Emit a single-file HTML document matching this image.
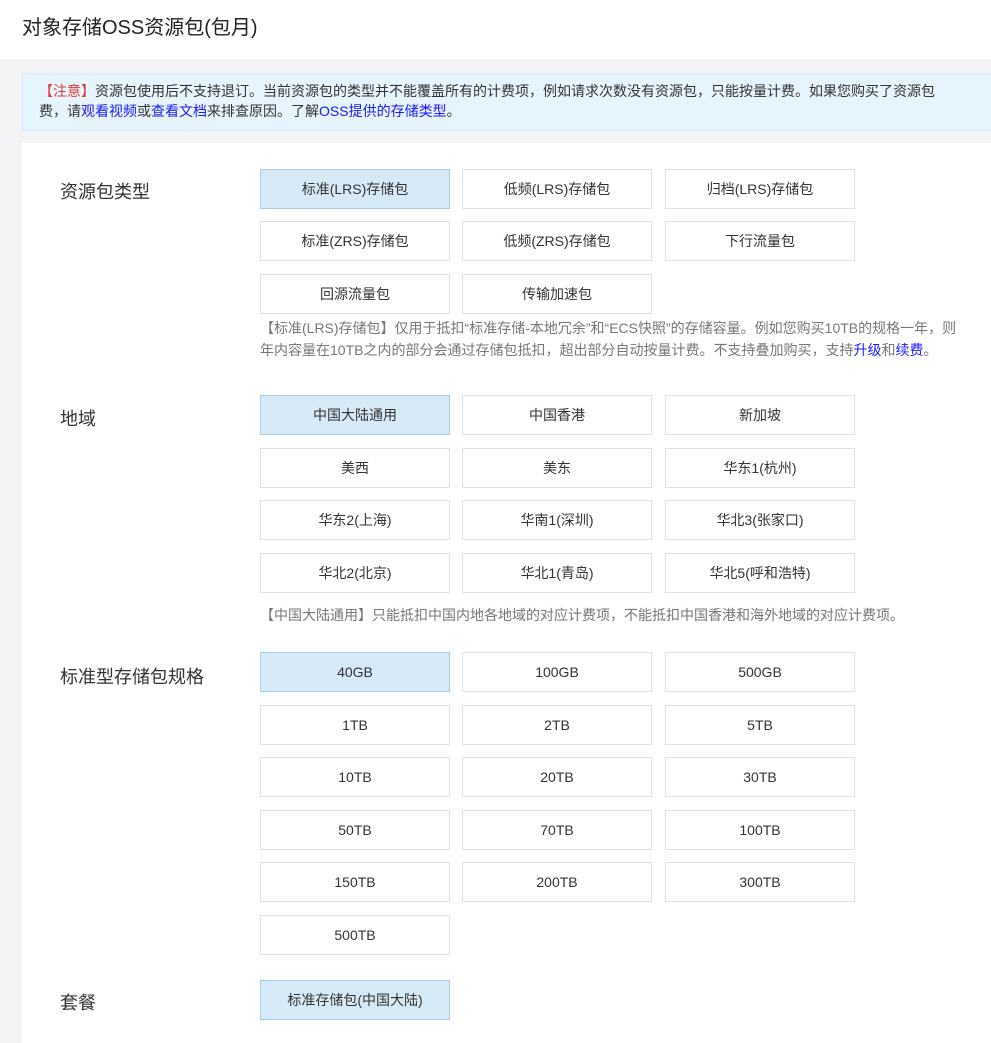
<!DOCTYPE html>
<html><head><meta charset="utf-8"><style>
*{margin:0;padding:0;box-sizing:border-box}
body{width:991px;height:1040px;overflow:hidden;background:#f2f3f5;font-family:"Liberation Sans","Noto Sans CJK SC",sans-serif;position:relative;color:#333}
.hd{position:absolute;left:0;top:0;width:991px;height:59px;background:#fff}
.hd h1{position:absolute;left:22px;top:13px;font-size:20px;font-weight:normal;color:#222;line-height:30px}
.nt{position:absolute;left:22px;top:73px;width:990px;height:58px;background:#e6f4fd;border:1px solid #d8eaf5;font-size:14px;line-height:20px;padding:7px 0 0 16px;color:#333;white-space:nowrap}
.nt .r{color:#e4393c}.nt a,.ds a{color:#1a1aff;text-decoration:none}
.pn{position:absolute;left:22px;top:143px;width:980px;height:900px;background:linear-gradient(#fff 960px,#f7f7f7)}
.lb{position:absolute;left:60px;font-size:18px;color:#333;line-height:24px}
.b{position:absolute;width:190px;height:40px;border:1px solid #e1e1e1;background:#fff;font-size:14px;text-align:center;line-height:38px;color:#333}
.b.s{background:#d6e9f6;border-color:#a9cbe8}
.ds{position:absolute;left:260px;font-size:14px;color:#777;line-height:22px;white-space:nowrap}
</style></head><body>
<div class="hd"><h1>对象存储OSS资源包(包月)</h1></div>
<div class="nt"><span class="r">【注意】</span>资源包使用后不支持退订。当前资源包的类型并不能覆盖所有的计费项，例如请求次数没有资源包，只能按量计费。如果您购买了资源包<br>费，请<a>观看视频</a>或<a>查看文档</a>来排查原因。了解<a>OSS提供的存储类型</a>。</div>
<div class="pn"></div>
<div class="lb" style="top:180px">资源包类型</div>
<div class="b s" style="left:260px;top:169px">标准(LRS)存储包</div>
<div class="b" style="left:462px;top:169px">低频(LRS)存储包</div>
<div class="b" style="left:665px;top:169px">归档(LRS)存储包</div>
<div class="b" style="left:260px;top:221px">标准(ZRS)存储包</div>
<div class="b" style="left:462px;top:221px">低频(ZRS)存储包</div>
<div class="b" style="left:665px;top:221px">下行流量包</div>
<div class="b" style="left:260px;top:274px">回源流量包</div>
<div class="b" style="left:462px;top:274px">传输加速包</div>
<div class="ds" style="top:317px">【标准(LRS)存储包】仅用于抵扣“标准存储-本地冗余”和“ECS快照”的存储容量。例如您购买10TB的规格一年，则<br>年内容量在10TB之内的部分会通过存储包抵扣，超出部分自动按量计费。不支持叠加购买，支持<a>升级</a>和<a>续费</a>。</div>
<div class="lb" style="top:407px">地域</div>
<div class="b s" style="left:260px;top:395px">中国大陆通用</div>
<div class="b" style="left:462px;top:395px">中国香港</div>
<div class="b" style="left:665px;top:395px">新加坡</div>
<div class="b" style="left:260px;top:448px">美西</div>
<div class="b" style="left:462px;top:448px">美东</div>
<div class="b" style="left:665px;top:448px">华东1(杭州)</div>
<div class="b" style="left:260px;top:500px">华东2(上海)</div>
<div class="b" style="left:462px;top:500px">华南1(深圳)</div>
<div class="b" style="left:665px;top:500px">华北3(张家口)</div>
<div class="b" style="left:260px;top:553px">华北2(北京)</div>
<div class="b" style="left:462px;top:553px">华北1(青岛)</div>
<div class="b" style="left:665px;top:553px">华北5(呼和浩特)</div>
<div class="ds" style="top:604px">【中国大陆通用】只能抵扣中国内地各地域的对应计费项，不能抵扣中国香港和海外地域的对应计费项。</div>
<div class="lb" style="top:665px">标准型存储包规格</div>
<div class="b s" style="left:260px;top:652px">40GB</div>
<div class="b" style="left:462px;top:652px">100GB</div>
<div class="b" style="left:665px;top:652px">500GB</div>
<div class="b" style="left:260px;top:705px">1TB</div>
<div class="b" style="left:462px;top:705px">2TB</div>
<div class="b" style="left:665px;top:705px">5TB</div>
<div class="b" style="left:260px;top:757px">10TB</div>
<div class="b" style="left:462px;top:757px">20TB</div>
<div class="b" style="left:665px;top:757px">30TB</div>
<div class="b" style="left:260px;top:810px">50TB</div>
<div class="b" style="left:462px;top:810px">70TB</div>
<div class="b" style="left:665px;top:810px">100TB</div>
<div class="b" style="left:260px;top:862px">150TB</div>
<div class="b" style="left:462px;top:862px">200TB</div>
<div class="b" style="left:665px;top:862px">300TB</div>
<div class="b" style="left:260px;top:915px">500TB</div>
<div class="lb" style="top:991px">套餐</div>
<div class="b s" style="left:260px;top:980px">标准存储包(中国大陆)</div>
</body></html>
